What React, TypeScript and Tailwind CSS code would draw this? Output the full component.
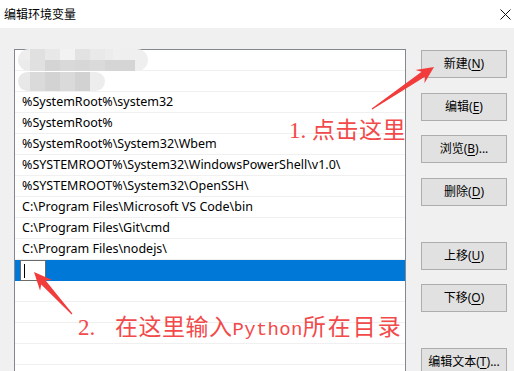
import React from "react";

const rows: string[] = [
  "",
  "",
  "%SystemRoot%\\system32",
  "%SystemRoot%",
  "%SystemRoot%\\System32\\Wbem",
  "%SYSTEMROOT%\\System32\\WindowsPowerShell\\v1.0\\",
  "%SYSTEMROOT%\\System32\\OpenSSH\\",
  "C:\\Program Files\\Microsoft VS Code\\bin",
  "C:\\Program Files\\Git\\cmd",
  "C:\\Program Files\\nodejs\\",
];

function arrowPts(
  tx: number,
  ty: number,
  hx: number,
  hy: number,
  headLen: number,
  headHalf: number,
  shaftHalf: number,
  tailHalf: number
): string {
  const dx = hx - tx;
  const dy = hy - ty;
  const len = Math.sqrt(dx * dx + dy * dy);
  const ux = dx / len;
  const uy = dy / len;
  const px = -uy;
  const py = ux;
  const bx = hx - ux * headLen;
  const by = hy - uy * headLen;
  const nx = hx - ux * (headLen - 4);
  const ny = hy - uy * (headLen - 4);
  const pts: [number, number][] = [
    [tx + px * tailHalf, ty + py * tailHalf],
    [nx + px * shaftHalf, ny + py * shaftHalf],
    [bx + px * headHalf, by + py * headHalf],
    [hx, hy],
    [bx - px * headHalf, by - py * headHalf],
    [nx - px * shaftHalf, ny - py * shaftHalf],
    [tx - px * tailHalf, ty - py * tailHalf],
  ];
  return pts.map((p) => `${p[0].toFixed(1)},${p[1].toFixed(1)}`).join(" ");
}

function Btn({ label, m, rest }: { label: string; m: string; rest: string }) {
  return (
    <div className="h-[28px] w-[86px] border border-[#adadad] bg-[#e1e1e1] flex items-center justify-center text-[12px] text-black leading-none">
      <span>
        {label}(<span className="underline underline-offset-2">{m}</span>){rest}
      </span>
    </div>
  );
}

function Sq({ w, c }: { w: number; c: string }) {
  return <div style={{ width: w, background: c }} className="h-full" />;
}

export default function App() {
  const font = { fontFamily: '"Noto Sans", "Noto Sans CJK SC", sans-serif' };
  return (
    <div className="relative w-[514px] h-[371px] overflow-hidden bg-[#f0f0f0]" style={font}>
      {/* title bar */}
      <div className="h-[28px] bg-white flex items-center justify-between pl-[4px] pr-[3px]">
        <span className="text-[12px] text-black leading-none" style={{ fontFamily: '"Noto Sans CJK SC", sans-serif' }}>
          编辑环境变量
        </span>
        <svg width="11" height="11" viewBox="0 0 11 11">
          <path d="M0.5 0.5 L10.5 10.5 M10.5 0.5 L0.5 10.5" stroke="#111" strokeWidth="1" />
        </svg>
      </div>

      {/* body */}
      <div className="flex pt-[21px]">
        <div className="ml-[14px] w-[392px] h-[400px] border border-[#828790] bg-white">
          {rows.map((r, i) => (
            <div
              key={i}
              className="h-[21px] border-b border-[#f0f0f0] flex items-center pl-[7px] text-[12.5px] text-black whitespace-nowrap"
            >
              {r}
            </div>
          ))}
          <div className="h-[21px] bg-[#0078d7] flex items-stretch pl-[5px]">
            <div className="w-[26px] bg-white border border-[#6b6b6b] flex items-center pl-[3px]">
              <div className="w-[1px] h-[14px] bg-black" />
            </div>
          </div>
          {[0, 1, 2, 3, 4].map((i) => (
            <div key={i} className="h-[21px] border-b border-[#f0f0f0]" />
          ))}
        </div>

        <div className="ml-[15px] mt-[1px] flex flex-col">
          <Btn label="新建" m="N" rest="" />
          <div className="mt-[15px]">
            <Btn label="编辑" m="E" rest="" />
          </div>
          <div className="mt-[14px]">
            <Btn label="浏览" m="B" rest="..." />
          </div>
          <div className="mt-[15px]">
            <Btn label="删除" m="D" rest="" />
          </div>
          <div className="mt-[36px]">
            <Btn label="上移" m="U" rest="" />
          </div>
          <div className="mt-[14px]">
            <Btn label="下移" m="O" rest="" />
          </div>
          <div className="mt-[36px]">
            <Btn label="编辑文本" m="T" rest="..." />
          </div>
        </div>
      </div>

      {/* blurred entries overlay */}
      <div className="absolute left-[18px] top-[49px] flex flex-col">
        <div className="flex h-[11px]">
          <div className="w-[12px] h-full bg-[#eeeeee] rounded-tl-full" />
          <Sq w={15} c="#e0e0e0" />
          <Sq w={15} c="#e8e8e8" />
          <Sq w={15} c="#f2f2f2" />
          <Sq w={15} c="#e2e2e2" />
          <Sq w={15} c="#e9e9e9" />
          <Sq w={8} c="#ececec" />
          <div className="w-[35px] h-full bg-[#efefef] rounded-tr-full" />
        </div>
        <div className="flex h-[11px]">
          <div className="w-[12px] h-full bg-[#ebebeb] rounded-bl-full" />
          <Sq w={15} c="#e0e0e0" />
          <Sq w={15} c="#d4d4d4" />
          <Sq w={15} c="#d9d9d9" />
          <Sq w={15} c="#d7d7d7" />
          <Sq w={15} c="#dadada" />
          <Sq w={30} c="#d5d5d5" />
          <div className="w-[13px] h-full bg-[#efefef] rounded-br-full" />
        </div>
        <div className="flex h-[19px] mt-[1px]">
          <div className="w-[12px] h-full bg-[#e8e8e8] rounded-l-full" />
          <Sq w={15} c="#dadada" />
          <Sq w={15} c="#d3d3d3" />
          <Sq w={15} c="#dadada" />
          <Sq w={15} c="#d2d2d2" />
          <div className="w-[15px] h-full bg-[#ededed] rounded-r-full" />
        </div>
      </div>

      {/* annotations */}
      <svg className="absolute inset-0 pointer-events-none" width="514" height="371">
        <polygon points={arrowPts(372, 109, 434, 67, 17, 8, 3, 0.6)} fill="#f23c3c" />
        <polygon points={arrowPts(72, 314, 34, 272, 18, 8, 3, 0.6)} fill="#f23c3c" />
      </svg>
      <div
        className="absolute left-[289px] top-[117px] text-[23px] leading-none text-[#f24a4a] whitespace-nowrap flex items-baseline"
        style={{ fontFamily: '"Noto Sans CJK SC", sans-serif' }}
      >
        <span className="w-[23px]" style={{ fontFamily: '"Liberation Serif", serif' }}>1.</span>
        <span className="tracking-[0.5px]">点击这里</span>
      </div>
      <div
        className="absolute left-[78px] top-[314px] text-[23px] leading-none text-[#f24a4a] whitespace-nowrap flex items-baseline"
        style={{ fontFamily: '"Noto Sans CJK SC", sans-serif' }}
      >
        <span className="w-[37px]" style={{ fontFamily: '"Liberation Serif", serif' }}>2.</span>
        <span className="tracking-[0.5px]">在这里输入</span>
        <span className="text-[19px] tracking-[0.3px]" style={{ fontFamily: '"Liberation Mono", monospace' }}>Python</span>
        <span className="tracking-[2px]">所在目录</span>
      </div>
    </div>
  );
}
